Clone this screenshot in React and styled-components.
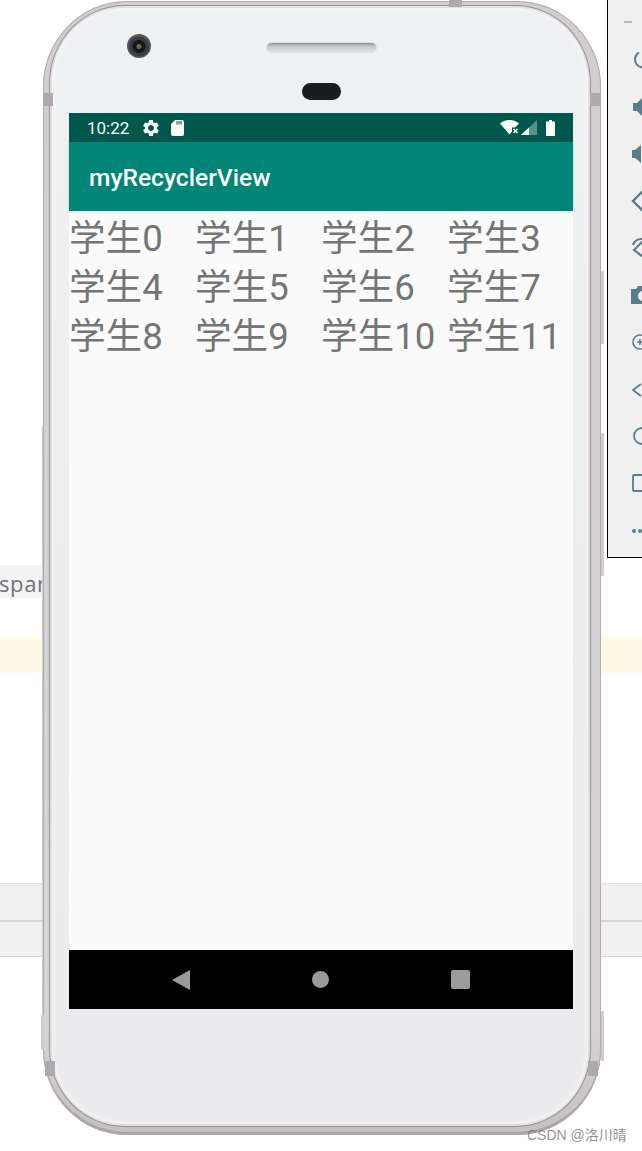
import React from "react";
import styled, { createGlobalStyle } from "styled-components";

const Global = createGlobalStyle`
  html, body { margin: 0; padding: 0; background: #fff; overflow: hidden; }
  #root { width: 642px; height: 1151px; position: relative; overflow: hidden; font-family: Roboto, "Noto Sans CJK SC", sans-serif; }
`;

/* IDE window showing behind the emulator */
const Backdrop = styled.div`
  display: flex;
  flex-direction: column;
  width: 642px;
  height: 1151px;
  padding-top: 565px;
  box-sizing: border-box;
`;
const CodeLine = styled.div`
  width: 44px;
  height: 33px;
  background: #f4f4f4;
  color: #6f7378;
  font: 22px/37px "Open Sans", sans-serif;
  letter-spacing: 0.6px;
  overflow: hidden;
  white-space: nowrap;
  text-indent: -1px;
`;
const Highlight = styled.div`
  height: 36px;
  margin-top: 39px;
  background: #fff8e5;
`;
const PanelBars = styled.div`
  margin-top: 210px;
  height: 74px;
  border-top: 1px solid #e0e0e0;
  border-bottom: 1px solid #d8d8d8;
  background: #f0f0f0;
  display: flex;
  flex-direction: column;
  box-sizing: border-box;
`;
const PanelDivider = styled.div`
  margin-top: 36px;
  height: 2px;
  background: #d6d6d6;
`;

/* emulator side toolbar */
const SideBar = styled.div`
  position: absolute;
  left: 607px;
  top: -2px;
  width: 60px;
  height: 560px;
  box-sizing: border-box;
  border: 1px solid #000;
  background: #f0f0f0;
  display: flex;
  flex-direction: column;
  padding: 0 0 0 23px;
`;
const SideSlot = styled.div`
  height: ${(p) => p.$h || 47}px;
  flex: none;
  display: flex;
  align-items: center;
  color: #5b7c8b;
`;
const Minimize = styled.div`
  width: 8px;
  height: 2px;
  margin: 9px 0 0 -7px;
  background: #a9bcc5;
`;

/* phone */
const Phone = styled.div`
  position: absolute;
  left: 43px;
  top: 1px;
  width: 558px;
  height: 1134px;
  box-sizing: border-box;
  border-radius: 84px / 86px;
  padding: 4px 10px 8px 6px;
  background: linear-gradient(180deg, #d2cdd0 0%, #d8d4d6 90%, #c4bfc1 100%);
  box-shadow: inset 0 0 0 1px #b2acaf, inset 0 -3px 0 #a9a3a6;
`;
const Rim = styled.div`
  height: 100%;
  box-sizing: border-box;
  padding: 2px;
  border-radius: 76px / 78px;
  background: #e2dfe1;
  border: 1px solid #969093;
`;
const Face = styled.div`
  height: 100%;
  box-sizing: border-box;
  border-radius: 72px / 74px;
  padding: 0 15px 0 17px;
  background: linear-gradient(180deg, #eff0f2 0%, #ebebed 100%);
  box-shadow: inset 0 0 6px #f9f9fb;
  display: flex;
  flex-direction: column;
`;
const TopBezel = styled.div`
  height: 105px;
  flex: none;
  position: relative;
`;
const Camera = styled.div`
  position: absolute;
  left: 58px;
  top: 26px;
  width: 24px;
  height: 24px;
  border-radius: 50%;
  background: radial-gradient(circle at 50% 52%, #6b6a42 0 2px, #16181a 3px 6px, #3a3c3f 7px 9px, #55575a 11px);
`;
const Speaker = styled.div`
  position: absolute;
  left: 197px;
  top: 34px;
  width: 111px;
  height: 11px;
  box-sizing: border-box;
  border-radius: 6px;
  background: linear-gradient(180deg, #8f9298 0%, #c4c6ca 35%, #dfe0e3 100%);
  border: 1px solid #dcdde0;
`;
const Sensor = styled.div`
  position: absolute;
  left: 233px;
  top: 75px;
  width: 39px;
  height: 17px;
  border-radius: 9px;
  background: #1b1c20;
`;
const Screen = styled.div`
  height: 896px;
  width: 504px;
  flex: none;
  display: flex;
  flex-direction: column;
  background: #fafafa;
`;
const StatusBar = styled.div`
  height: 29px;
  flex: none;
  background: #00574b;
  color: #fff;
  display: flex;
  align-items: center;
  padding: 0 18px 0 18px;
  font-size: 17px;
`;
const Clock = styled.span`
  margin-right: 12px;
`;
const StatusIcon = styled.svg`
  display: block;
  flex: none;
  margin-right: ${(p) => p.$mr || 0}px;
`;
const Spacer = styled.div`
  flex: 1;
`;
const AppBar = styled.div`
  height: 69px;
  flex: none;
  box-sizing: border-box;
  background: #008577;
  color: #fff;
  display: flex;
  align-items: center;
  padding: 2px 0 0 20px;
  font-size: 24.6px;
  font-weight: 500;
  box-shadow: 0 1px 3px rgba(0, 0, 0, 0.12);
`;
const Grid = styled.div`
  flex: 1;
  display: grid;
  padding-top: 3px;
  grid-template-columns: repeat(4, 126px);
  grid-auto-rows: 49px;
  align-content: start;
`;
const Item = styled.div`
  font-family: Roboto, "Noto Sans CJK SC", sans-serif;
  font-size: 36.6px;
  line-height: 49px;
  color: #757575;
  white-space: nowrap;
`;
const NavBar = styled.div`
  height: 59px;
  flex: none;
  background: #000;
  display: flex;
  align-items: center;
  padding-left: 103px;
`;
const NavBack = styled.svg`
  display: block;
  margin-right: 122px;
`;
const NavHome = styled.div`
  width: 17px;
  height: 17px;
  border-radius: 50%;
  background: #9b9b9b;
  margin-right: 122px;
`;
const NavRecents = styled.div`
  width: 19px;
  height: 19px;
  border-radius: 2px;
  background: #9b9b9b;
`;

/* details on the phone's metal edge */
const Band = styled.div`
  position: absolute;
  left: ${(p) => p.$x}px;
  top: ${(p) => p.$y}px;
  width: ${(p) => p.$w}px;
  height: ${(p) => p.$h}px;
  background: #aea9ac;
`;
const SideKey = styled.div`
  position: absolute;
  left: ${(p) => p.$x}px;
  top: ${(p) => p.$y}px;
  width: ${(p) => p.$w || 3}px;
  height: ${(p) => p.$h}px;
  background: #cfcccd;
  border-radius: 1px;
`;
const Watermark = styled.div`
  position: absolute;
  left: 527px;
  top: 1126px;
  font: 14px/18px "Liberation Sans", "Noto Sans CJK SC", sans-serif;
  color: rgba(110, 110, 110, 0.75);
  white-space: nowrap;
`;

const students = Array.from({ length: 12 }, (_, i) => `学生${i}`);

const Icon = ({ children }) => (
  <svg width="24" height="24" viewBox="0 0 24 24" fill="none" stroke="currentColor" strokeWidth="2">
    {children}
  </svg>
);

const toolbar = [
  <path key="a" d="M8 4.5A8 8 0 1 0 16 4.5M12 1v9" />,
  <path key="b" fill="currentColor" stroke="none" d="M2 8h4l6-6v20l-6-6H2z" />,
  <path key="c" fill="currentColor" stroke="none" d="M1 8h3l6-5v18l-6-5H1z" />,
  <path key="d" d="M2 12l9-9 9 9-9 9z" strokeWidth="2.4" />,
  <path key="e" d="M3 14l9-9 8 8-8 8zM2 9a9 9 0 0 1 9-6" strokeWidth="2.2" />,
  <path key="f" fill="currentColor" stroke="none" fillRule="evenodd" d="M0 6h5l2-3h10l2 3h5v15H0zM12 8a5 5 0 1 0 0 10 5 5 0 0 0 0-10z" />,
  <g key="g" strokeWidth="1.6"><circle cx="9" cy="12" r="7" /><path d="M6 12h6M9 9v6" /></g>,
  <path key="h" d="M10 7l-8 6 8 6" strokeWidth="1.8" />,
  <circle key="i" cx="11" cy="12" r="8" strokeWidth="1.8" />,
  <rect key="j" x="2" y="4" width="16" height="16" rx="1" strokeWidth="1.8" />,
  <g key="k" fill="currentColor" stroke="none"><circle cx="3" cy="13" r="2" /><circle cx="9" cy="13" r="2" /></g>,
];

export default function App() {
  return (
    <>
      <Global />
      <Backdrop>
        <CodeLine>span</CodeLine>
        <Highlight />
        <PanelBars>
          <PanelDivider />
        </PanelBars>
      </Backdrop>

      <SideBar>
        <SideSlot $h={37}><Minimize /></SideSlot>
        {toolbar.map((g, i) => (
          <SideSlot key={i}><Icon>{g}</Icon></SideSlot>
        ))}
      </SideBar>

      <Phone>
        <Rim>
          <Face>
            <TopBezel>
              <Camera />
              <Speaker />
              <Sensor />
            </TopBezel>
            <Screen>
              <StatusBar>
                <Clock>10:22</Clock>
                <StatusIcon width="20" height="20" viewBox="0 0 24 24" $mr={10}>
                  <path fill="#fff" d="M19.14 12.94c.04-.3.06-.61.06-.94 0-.32-.02-.64-.07-.94l2.03-1.58c.18-.14.23-.41.12-.61l-1.92-3.32c-.12-.22-.37-.29-.59-.22l-2.39.96c-.5-.38-1.03-.7-1.62-.94l-.36-2.54c-.04-.24-.24-.41-.48-.41h-3.84c-.24 0-.43.17-.47.41l-.36 2.54c-.59.24-1.13.57-1.62.94l-2.39-.96c-.22-.08-.47 0-.59.22L2.74 8.87c-.12.21-.08.47.12.61l2.03 1.58c-.05.3-.09.63-.09.94s.02.64.07.94l-2.03 1.58c-.18.14-.23.41-.12.61l1.92 3.32c.12.22.37.29.59.22l2.39-.96c.5.38 1.03.7 1.62.94l.36 2.54c.05.24.24.41.48.41h3.84c.24 0 .44-.17.47-.41l.36-2.54c.59-.24 1.13-.56 1.62-.94l2.39.96c.22.08.47 0 .59-.22l1.92-3.32c.12-.22.07-.47-.12-.61l-2.01-1.58zM12 15.6c-1.98 0-3.6-1.62-3.6-3.6s1.62-3.6 3.6-3.6 3.6 1.62 3.6 3.6-1.62 3.6-3.6 3.6z" />
                </StatusIcon>
                <StatusIcon width="13" height="16" viewBox="0 0 13 16">
                  <path fill="#fff" d="M4 0h7a2 2 0 0 1 2 2v12a2 2 0 0 1-2 2H2a2 2 0 0 1-2-2V4z" />
                  <path stroke="#00574b" strokeWidth="1" d="M6 1v3.5M8 1v3.5M10 1v3.5" />
                </StatusIcon>
                <Spacer />
                <StatusIcon width="19" height="15" viewBox="0 0 19 15" $mr={2}>
                  <path fill="#fff" d="M0 3.5A14 14 0 0 1 9.5 0 14 14 0 0 1 19 3.5L15 7.5H12V11.5L9.5 14.5z" />
                  <path stroke="#fff" strokeWidth="1.4" d="M13.5 9l4 4M17.5 9l-4 4" />
                </StatusIcon>
                <StatusIcon width="16" height="15" viewBox="0 0 16 15" $mr={9}>
                  <path fill="#fff" fillOpacity="0.35" d="M16 0v15H0z" />
                  <path fill="#fff" d="M8 7.5V15H0z" />
                </StatusIcon>
                <StatusIcon width="9" height="16" viewBox="0 0 9 16">
                  <path fill="#fff" d="M3 0h3v1.5h3V16H0V1.5h3z" />
                </StatusIcon>
              </StatusBar>
              <AppBar>myRecyclerView</AppBar>
              <Grid>
                {students.map((s) => (
                  <Item key={s}>{s}</Item>
                ))}
              </Grid>
              <NavBar>
                <NavBack width="18" height="20" viewBox="0 0 18 20">
                  <path fill="#9b9b9b" d="M18 0v20L0 10z" />
                </NavBack>
                <NavHome />
                <NavRecents />
              </NavBar>
            </Screen>
          </Face>
        </Rim>
        <Band $x={0} $y={92} $w={10} $h={13} />
        <Band $x={547} $y={92} $w={11} $h={13} />
        <Band $x={406} $y={-1} $w={13} $h={7} />
        <Band $x={2} $y={1060} $w={10} $h={15} />
        <Band $x={545} $y={1060} $w={10} $h={15} />
        <SideKey $x={558} $y={270} $h={73} />
        <SideKey $x={558} $y={432} $h={143} />
        <SideKey $x={-1} $y={425} $w={1} $h={590} />
        <SideKey $x={-2} $y={1014} $h={35} />
        <SideKey $x={558} $y={1010} $h={50} />
      </Phone>

      <Watermark>CSDN @洛川晴</Watermark>
    </>
  );
}
